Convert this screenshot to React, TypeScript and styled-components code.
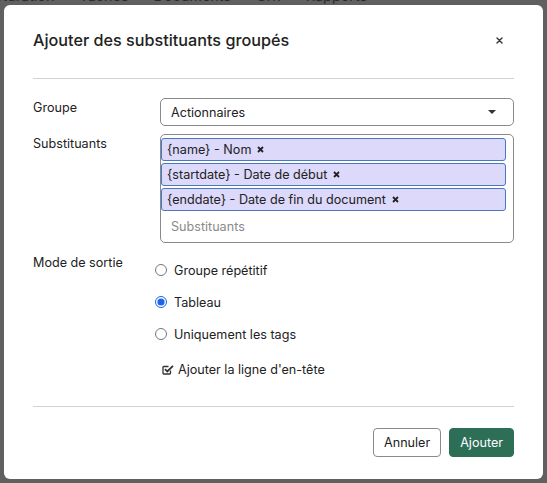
import styled, { createGlobalStyle } from "styled-components";

const GlobalStyle = createGlobalStyle`
  html, body {
    margin: 0;
    padding: 0;
    background: #f0f0f0;
    font-family: Inter, "Noto Sans", "Liberation Sans", sans-serif;
    color: #222;
  }
`;

const substituants = ["{name} - Nom", "{startdate} - Date de début", "{enddate} - Date de fin du document"];
const modes = ["Groupe répétitif", "Tableau", "Uniquement les tags"];

const App = () => {
  return (
    <>
      <GlobalStyle />
      <Page>
        <Nav>
          <NavItem>Facturation</NavItem>
          <NavItem>Tâches</NavItem>
          <NavItem>Documents</NavItem>
          <NavItem>Grh</NavItem>
          <NavItem>Rapports</NavItem>
        </Nav>
      </Page>
      <Backdrop>
        <Modal>
          <Header>
            <Title>Ajouter des substituants groupés</Title>
            <CloseButton aria-label="Fermer">
              <svg width="7" height="7" viewBox="0 0 7 7">
                <path d="M1 1L6 6M6 1L1 6" stroke="#333" strokeWidth="1.4" strokeLinecap="round" />
              </svg>
            </CloseButton>
          </Header>
          <Divider />
          <Body>
            <Label>Groupe</Label>
            <Select>
              <span>Actionnaires</span>
              <svg width="8" height="4" viewBox="0 0 8 4">
                <path d="M0 0H8L4 4Z" fill="#333" />
              </svg>
            </Select>

            <Label>Substituants</Label>
            <TagBox>
              {substituants.map((s) => (
                <Tag key={s}>
                  {s}
                  <svg width="7" height="7" viewBox="0 0 7 7">
                    <path d="M1 1L6 6M6 1L1 6" stroke="#222" strokeWidth="1.8" />
                  </svg>
                </Tag>
              ))}
              <Placeholder>Substituants</Placeholder>
            </TagBox>

            <Label $top={3}>Mode de sortie</Label>
            <Options>
              {modes.map((m, i) => (
                <RadioRow key={m}>
                  <Radio type="radio" name="mode" defaultChecked={i === 1} />
                  {m}
                </RadioRow>
              ))}
              <CheckRow>
                <svg width="12" height="11" viewBox="0 0 12 11">
                  <path d="M8.5 6.5V9.2Q8.5 10 7.7 10H1.8Q1 10 1 9.2V3.3Q1 2.5 1.8 2.5H6.5" fill="none" stroke="#333" strokeWidth="1.3" />
                  <path d="M3 5.2L5.3 7.5L11 1.8" fill="none" stroke="#333" strokeWidth="1.8" />
                </svg>
                Ajouter la ligne d'en-tête
              </CheckRow>
            </Options>
          </Body>
          <Divider />
          <Footer>
            <Button>Annuler</Button>
            <Button $primary>Ajouter</Button>
          </Footer>
        </Modal>
      </Backdrop>
    </>
  );
};

export default App;

const Page = styled.div`
  height: 483px;
  overflow: hidden;
`;

const Nav = styled.nav`
  display: flex;
  gap: 25px;
  margin: -14px 0 0 -22px;
  font-size: 14.4px;
  line-height: 20px;
  color: #686868;
`;

const NavItem = styled.span``;

const Backdrop = styled.div`
  position: fixed;
  inset: 0;
  background: rgba(0, 0, 0, 0.6);
  display: flex;
  justify-content: center;
  align-items: flex-start;
  padding-top: 5px;
`;

const Modal = styled.div`
  width: 539px;
  height: 474px;
  box-sizing: border-box;
  background: #fff;
  border-radius: 6px;
  padding: 0 29px;
  display: flex;
  flex-direction: column;
`;

const Header = styled.div`
  display: flex;
  align-items: center;
  justify-content: space-between;
  padding: 23px 0 26px;
`;

const Title = styled.h2`
  margin: 0;
  font-size: 16.2px;
  line-height: 24px;
  font-weight: 500;
  color: #222;
`;

const CloseButton = styled.button`
  border: none;
  background: none;
  padding: 0;
  margin-right: 11px;
  display: flex;
`;

const Divider = styled.hr`
  margin: 0;
  border: none;
  border-top: 1px solid #d2d2d2;
`;

const Body = styled.div`
  display: grid;
  grid-template-columns: 127px 1fr;
  row-gap: 8px;
  padding: 19px 0 21px;
  font-size: 12.6px;
`;

const Label = styled.div<{ $top?: number }>`
  line-height: 18px;
  padding-top: ${(p) => p.$top ?? 1}px;
  color: #222;
`;

const Select = styled.div`
  height: 28px;
  box-sizing: border-box;
  border: 1px solid #8a8a8a;
  border-radius: 5px;
  display: flex;
  align-items: center;
  justify-content: space-between;
  padding: 0 17px 0 10px;
  color: #222;
`;

const TagBox = styled.div`
  border: 1px solid #8a8a8a;
  border-radius: 5px;
  padding: 3px 7px 0 0;
  display: flex;
  flex-direction: column;
  gap: 2px;
`;

const Tag = styled.div`
  height: 23px;
  box-sizing: border-box;
  background: #dcd9fb;
  border: 1px solid #4a78c0;
  border-radius: 3px;
  display: flex;
  align-items: center;
  gap: 6px;
  padding-left: 5px;
  color: #222;
`;

const Placeholder = styled.div`
  color: #8a8a8a;
  padding: 5px 0 6px 10px;
  line-height: 18px;
`;

const Options = styled.div`
  display: flex;
  flex-direction: column;
  padding-top: 3px;
`;

const RadioRow = styled.label`
  height: 32px;
  display: flex;
  align-items: center;
  gap: 7px;
  margin-left: -5px;
  color: #222;
`;

const Radio = styled.input`
  width: 12px;
  height: 12px;
  margin: 0;
  accent-color: #1a66e8;
`;

const CheckRow = styled.div`
  height: 32px;
  margin: 3px 0 0 2px;
  display: flex;
  align-items: center;
  gap: 4px;
  color: #222;
`;

const Footer = styled.div`
  display: flex;
  justify-content: flex-end;
  gap: 8px;
  padding-top: 21px;
`;

const Button = styled.button<{ $primary?: boolean }>`
  height: 29px;
  padding: 0 10px;
  font-family: inherit;
  font-size: 12.6px;
  border-radius: 4px;
  border: 1px solid ${(p) => (p.$primary ? "#2d6e57" : "#8a8a8a")};
  background: ${(p) => (p.$primary ? "#2d6e57" : "#fff")};
  color: ${(p) => (p.$primary ? "#fff" : "#222")};
`;
